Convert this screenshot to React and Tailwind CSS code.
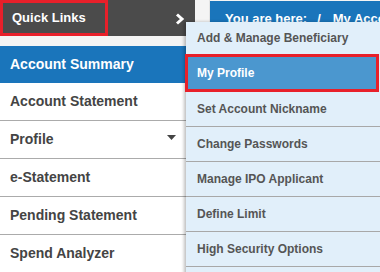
import React from 'react';

const sideItems = [
  { label: 'Account Statement' },
  { label: 'Profile', caret: true },
  { label: 'e-Statement' },
  { label: 'Pending Statement' },
  { label: 'Spend Analyzer' },
];

const menuItems = [
  'Set Account Nickname',
  'Change Passwords',
  'Manage IPO Applicant',
  'Define Limit',
  'High Security Options',
];

const App = () => {
  return (
    <div
      className="relative w-[380px] h-[272px] overflow-hidden bg-white"
      style={{ fontFamily: '"Liberation Sans", Arial, sans-serif' }}
    >
      {/* top bar */}
      <div className="flex h-[36px] bg-[#f4f4f4]">
        <div className="flex shrink-0 items-center justify-between w-[195px] bg-[#4b4b4b] pr-[10px]">
          <div className="flex items-center h-[36px] w-[108px] border-[3px] border-[#e8202a] pl-[9px] text-[13px] font-bold text-white">
            Quick Links
          </div>
          <svg width="10" height="12" viewBox="0 0 10 12" className="mt-[2px]">
            <polyline points="2,1.5 7,6 2,10.5" fill="none" stroke="white" strokeWidth="3" />
          </svg>
        </div>
        <div className="w-[15px] shrink-0 border-r border-[#e4e4e4]" />
        <div className="flex-1 min-w-0 overflow-hidden flex items-center mt-[1px] bg-[#1a75bb] pl-[15px] text-[13px] font-bold text-white whitespace-nowrap">
          <span>You are here:</span>
          <span className="ml-[10px]">/</span>
          <span className="ml-[12px]">My Account</span>
        </div>
      </div>
      <div className="h-[10px] bg-[#f4f4f4]" />

      {/* side menu */}
      <div className="w-[195px]">
        <div className="flex items-center h-[37px] bg-[#1a75bb] pl-[10px] text-[14px] font-bold text-white">
          Account Summary
        </div>
        {sideItems.map((item) => (
          <div
            key={item.label}
            className="flex items-center justify-between h-[38px] border-b border-[#ababab] pl-[10px] pr-[19px] text-[14px] font-bold text-[#444]"
          >
            <span>{item.label}</span>
            {item.caret && (
              <svg width="9" height="5" viewBox="0 0 9 5" className="mb-[4px]">
                <polygon points="0,0 9,0 4.5,5" fill="#444" />
              </svg>
            )}
          </div>
        ))}
      </div>

      {/* quick links dropdown */}
      <div className="absolute left-[186px] top-[22px] right-0 bg-[#e1effa] shadow-[-2px_0_3px_rgba(0,0,0,0.25)] text-[12px] font-bold text-[#555]">
        <div className="flex items-center h-[32px] pl-[11px]">Add &amp; Manage Beneficiary</div>
        <div className="h-[38px] border-[3px] border-[#e8202a] mr-[1px] -ml-[1px]">
          <div className="flex items-center h-full bg-[#4b97cf] pl-[9px] text-white">My Profile</div>
        </div>
        {menuItems.map((label) => (
          <div key={label} className="flex items-center h-[35px] border-b border-[#a8a8a8] pl-[11px]">
            {label}
          </div>
        ))}
        <div className="h-[35px]" />
      </div>
    </div>
  );
};

export default App;
